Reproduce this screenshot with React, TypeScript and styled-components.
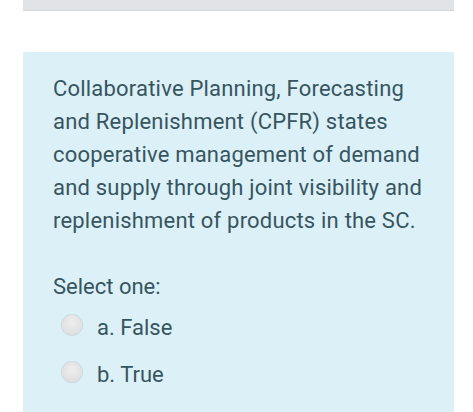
import React from "react";
import styled, { createGlobalStyle } from "styled-components";

const Global = createGlobalStyle`
  html, body { margin: 0; padding: 0; background: #ffffff; }
  body { font-family: Roboto, "Noto Sans", Arial, sans-serif; }
`;

const Page = styled.div`
  width: 473px;
  height: 412px;
  overflow: hidden;
  padding: 0 19px 0 23px;
  box-sizing: border-box;
  display: flex;
  flex-direction: column;
  gap: 41px;
`;

const TopBar = styled.div`
  height: 11px;
  flex-shrink: 0;
  background: #e1e3e7;
  border-bottom: 1px solid #d3d5d9;
  box-sizing: border-box;
`;

const Panel = styled.div`
  background: #dcf0f7;
  padding: 20px 20px 40px 30px;
  flex: 1 0 auto;
  color: #37555f;
`;

const Question = styled.p`
  margin: 0;
  font-size: 22px;
  line-height: 33px;
  letter-spacing: 0.2px;
`;

const Prompt = styled.div`
  margin-top: 37px;
  font-size: 22px;
  line-height: 26px;
`;

const Options = styled.div`
  display: flex;
  flex-direction: column;
  gap: 21px;
  margin-top: 15px;
  padding-left: 9px;
`;

const Option = styled.label`
  display: flex;
  align-items: center;
  gap: 15px;
  font-size: 22px;
  line-height: 26px;
`;

const Radio = styled.span`
  width: 20px;
  height: 20px;
  border-radius: 50%;
  background: radial-gradient(circle at 50% 40%, #eeeeee 0%, #e2e2e4 60%, #d4d5d8 100%);
  box-shadow: 0 0 0 1px rgba(190, 195, 200, 0.5);
  margin-top: -6px;
  flex-shrink: 0;
`;

export default function App() {
  return (
    <>
      <Global />
      <Page>
        <TopBar />
        <Panel>
          <Question>
            Collaborative Planning, Forecasting and Replenishment (CPFR) states
            cooperative management of demand and supply through joint visibility and
            replenishment of products in the SC.
          </Question>
          <Prompt>Select one:</Prompt>
          <Options>
            <Option>
              <Radio />
              a. False
            </Option>
            <Option>
              <Radio />
              b. True
            </Option>
          </Options>
        </Panel>
      </Page>
    </>
  );
}
